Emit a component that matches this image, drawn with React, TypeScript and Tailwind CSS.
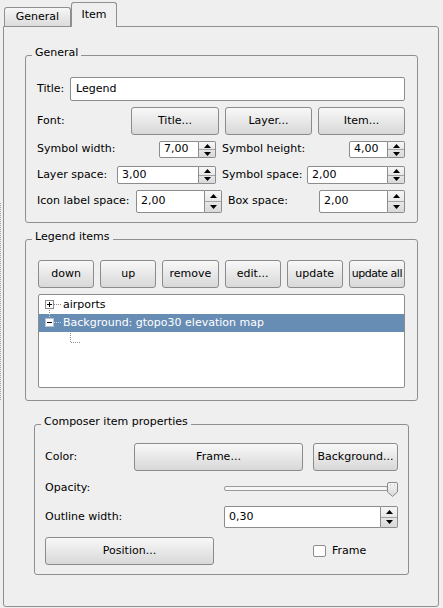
import React from "react";

function Btn({ children, className = "" }: { children: React.ReactNode; className?: string }) {
  return (
    <div
      className={`flex items-center justify-center rounded-[3px] border border-[#8b8b8b] bg-linear-to-b from-[#f8f8f8] to-[#d8d8d8] text-black whitespace-nowrap ${className}`}
    >
      {children}
    </div>
  );
}

function Spin({ value, className = "" }: { value: string; className?: string }) {
  return (
    <div className={`flex ${className}`}>
      <div className="flex flex-1 items-center rounded-l-[2px] border border-[#8c8c8c] bg-white pl-[4px]">{value}</div>
      <div className="flex w-[17px] flex-col rounded-r-[2px] border border-l-0 border-[#8c8c8c] bg-linear-to-b from-[#f7f7f7] to-[#d9d9d9]">
        <div className="flex flex-1 items-center justify-center border-b border-[#a3a3a3]">
          <svg width="7" height="4" viewBox="0 0 7 4">
            <polygon points="0,4 3.5,0 7,4" fill="#000" />
          </svg>
        </div>
        <div className="flex flex-1 items-center justify-center">
          <svg width="7" height="4" viewBox="0 0 7 4">
            <polygon points="0,0 7,0 3.5,4" fill="#000" />
          </svg>
        </div>
      </div>
    </div>
  );
}

function Group({ title, className = "", children }: { title: string; className?: string; children: React.ReactNode }) {
  return (
    <fieldset className={`rounded-[3px] border border-[#8f8f8f] ${className}`}>
      <legend className="ml-[6px] px-[3px] pb-[4px] leading-[14px]">{title}</legend>
      {children}
    </fieldset>
  );
}

export default function App() {
  return (
    <div className="flex h-[608px] w-[443px] overflow-hidden bg-[#efefef] font-['DejaVu_Sans',sans-serif] text-[11px] text-black">
      {/* splitter handle */}
      <div className="w-[3px] shrink-0 pt-[203px]">
        <div className="h-[197px] w-[2px] border-l border-dotted border-[#a5a5a5]" />
      </div>

      <div className="flex w-[436px] flex-col">
        {/* Tabs */}
        <div className="flex h-[26px] items-end pl-[1px]">
          <div className="flex h-[19px] w-[67px] items-center justify-center rounded-t-[3px] border border-b-0 border-[#8f8f8f] bg-linear-to-b from-[#f6f6f6] to-[#dcdcdc]">
            General
          </div>
          <div className="relative z-10 -mb-[1px] flex h-[25px] w-[46px] items-center justify-center rounded-t-[3px] border border-b-0 border-[#8f8f8f] bg-[#efefef]">
            Item
          </div>
        </div>

        {/* Pane */}
        <div className="flex h-[581px] flex-col rounded-[3px] rounded-tl-none border border-[#8f8f8f]">
          {/* General */}
          <Group title="General" className="ml-[21px] mt-[19px] w-[393px]">
            <div className="flex flex-col pb-[9px] pl-[11px] pr-[12px] pt-[13px]">
              <div className="flex h-[24px] items-center">
                <span className="w-[33px]">Title:</span>
                <div className="flex h-full flex-1 items-center rounded-[2px] border border-[#8c8c8c] bg-white pl-[5px]">Legend</div>
              </div>
              <div className="mt-[6px] flex h-[28px] items-center">
                <span className="flex-1">Font:</span>
                <Btn className="h-full w-[88px]">Title...</Btn>
                <Btn className="ml-[6px] h-full w-[87px]">Layer...</Btn>
                <Btn className="ml-[6px] h-full w-[87px]">Item...</Btn>
              </div>
              <div className="mt-[6px] flex h-[17px]">
                <div className="flex w-[179px] items-center justify-between">
                  <span>Symbol width:</span>
                  <Spin value="7,00" className="h-full w-[57px]" />
                </div>
                <div className="ml-[6px] flex flex-1 items-center justify-between">
                  <span>Symbol height:</span>
                  <Spin value="4,00" className="h-full w-[56px]" />
                </div>
              </div>
              <div className="mt-[8px] flex h-[18px]">
                <div className="flex w-[179px] items-center justify-between">
                  <span>Layer space:</span>
                  <Spin value="3,00" className="h-full w-[99px]" />
                </div>
                <div className="ml-[6px] flex flex-1 items-center justify-between">
                  <span>Symbol space:</span>
                  <Spin value="2,00" className="h-full w-[98px]" />
                </div>
              </div>
              <div className="mt-[6px] flex h-[23px]">
                <div className="flex w-[185px] items-center justify-between">
                  <span>Icon label space:</span>
                  <Spin value="2,00" className="h-full w-[86px]" />
                </div>
                <div className="ml-[6px] flex flex-1 items-center justify-between">
                  <span>Box space:</span>
                  <Spin value="2,00" className="h-full w-[86px]" />
                </div>
              </div>
            </div>
          </Group>

          {/* Legend items */}
          <Group title="Legend items" className="ml-[21px] mt-[7px] w-[393px]">
            <div className="flex flex-col px-[12px] pb-[12px] pt-[12px]">
              <div className="grid h-[28px] grid-cols-6 gap-x-[6px]">
                <Btn>down</Btn>
                <Btn>up</Btn>
                <Btn>remove</Btn>
                <Btn>edit...</Btn>
                <Btn>update</Btn>
                <Btn className="tracking-[-0.5px]">update all</Btn>
              </div>
              <div className="mt-[6px] flex h-[94px] flex-col rounded-[2px] border border-[#8c8c8c] bg-white pt-[1px]">
                <div className="flex h-[18px] items-center">
                  <svg width="24" height="18" viewBox="0 0 24 18" className="shrink-0">
                    <rect x="6.5" y="4.5" width="8" height="8" fill="#fff" stroke="#8c8c8c" />
                    <line x1="8" y1="8.5" x2="13" y2="8.5" stroke="#000" />
                    <line x1="10.5" y1="6" x2="10.5" y2="11" stroke="#000" />
                    <line x1="15" y1="8.5" x2="22" y2="8.5" stroke="#8c8c8c" strokeDasharray="1 1" />
                    <line x1="10.5" y1="14" x2="10.5" y2="18" stroke="#8c8c8c" strokeDasharray="1 1" />
                  </svg>
                  <span>airports</span>
                </div>
                <div className="flex h-[18px] items-center bg-[#688db5] text-white">
                  <svg width="24" height="18" viewBox="0 0 24 18" className="shrink-0">
                    <line x1="10.5" y1="0" x2="10.5" y2="4" stroke="#c7d3e2" strokeDasharray="1 1" />
                    <rect x="6.5" y="4.5" width="8" height="8" fill="#fff" stroke="#b5c2d2" />
                    <line x1="8" y1="8.5" x2="13" y2="8.5" stroke="#000" />
                    <line x1="15" y1="8.5" x2="22" y2="8.5" stroke="#c7d3e2" strokeDasharray="1 1" />
                  </svg>
                  <span>Background: gtopo30 elevation map</span>
                </div>
                <div className="flex h-[18px] items-center">
                  <svg width="48" height="18" viewBox="0 0 48 18" className="shrink-0">
                    <line x1="31.5" y1="1" x2="31.5" y2="10" stroke="#8c8c8c" strokeDasharray="1 1" />
                    <line x1="32" y1="10.5" x2="41" y2="10.5" stroke="#8c8c8c" strokeDasharray="1 1" />
                  </svg>
                </div>
              </div>
            </div>
          </Group>

          {/* Composer item properties */}
          <Group title="Composer item properties" className="ml-[30px] mt-[14px] w-[375px]">
            <div className="flex flex-col px-[10px] pb-[9px] pt-[10px]">
              <div className="flex h-[28px] items-center">
                <span className="flex-1">Color:</span>
                <Btn className="h-full w-[169px]">Frame...</Btn>
                <Btn className="ml-[10px] h-full w-[85px]">Background...</Btn>
              </div>
              <div className="mt-[6px] flex h-[23px] items-center">
                <span className="w-[179px]">Opacity:</span>
                <div className="flex flex-1 items-center">
                  <div className="h-[5px] flex-1 rounded-[2px] border border-[#9a9a9a] bg-[#f6f6f6]" />
                  <svg width="11" height="15" viewBox="0 0 11 15" className="-ml-[1px] mt-[2px] shrink-0">
                    <defs>
                      <linearGradient id="hg" x1="0" y1="0" x2="0" y2="1">
                        <stop offset="0" stopColor="#f8f8f8" />
                        <stop offset="1" stopColor="#d6d6d6" />
                      </linearGradient>
                    </defs>
                    <path d="M2 0.5 H9 Q10.5 0.5 10.5 2 V10 L5.5 14.5 L0.5 10 V2 Q0.5 0.5 2 0.5 Z" fill="url(#hg)" stroke="#8a8a8a" />
                    <line x1="3.5" y1="2.5" x2="3.5" y2="3.5" stroke="#b0b0b0" />
                    <line x1="7.5" y1="2.5" x2="7.5" y2="3.5" stroke="#b0b0b0" />
                  </svg>
                </div>
              </div>
              <div className="mt-[6px] flex h-[22px] items-center">
                <span className="w-[179px]">Outline width:</span>
                <Spin value="0,30" className="h-full flex-1" />
              </div>
              <div className="mt-[9px] flex h-[28px] items-center">
                <Btn className="h-full w-[169px]">Position...</Btn>
                <div className="ml-[99px] h-[12px] w-[13px] rounded-[2px] border border-[#8c8c8c] bg-white" />
                <span className="ml-[6px]">Frame</span>
              </div>
            </div>
          </Group>
        </div>
      </div>
    </div>
  );
}
